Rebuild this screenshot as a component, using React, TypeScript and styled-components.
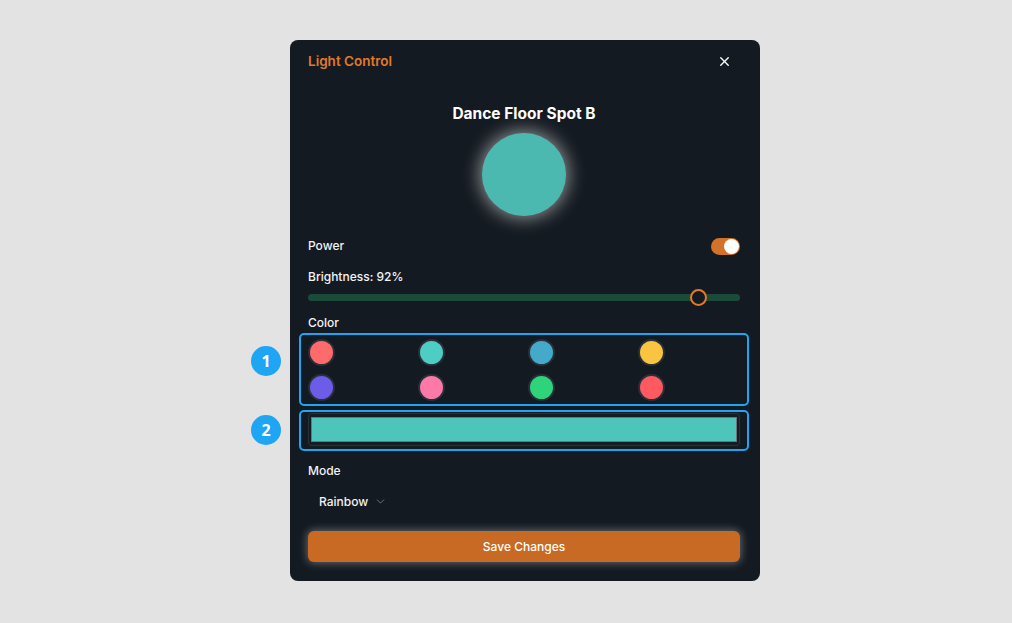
import React from "react";
import styled, { createGlobalStyle } from "styled-components";
import { X, ChevronDown } from "lucide-react";

const Global = createGlobalStyle`
  html, body { margin: 0; padding: 0; background: #e3e3e3; }
  body { font-family: Inter, "Noto Sans", "Liberation Sans", sans-serif; }
  * { box-sizing: border-box; }
`;

const Page = styled.div`
  width: 1012px;
  height: 623px;
  padding: 40px 0 0 290px;
  background: #e3e3e3;
`;

const Card = styled.div`
  width: 470px;
  height: 541px;
  background: #141a21;
  border-radius: 8px;
  padding: 11px 20px 19px 18px;
  display: flex;
  flex-direction: column;
  color: #f3f4f6;
`;

const Header = styled.div`
  display: flex;
  align-items: center;
  justify-content: space-between;
  height: 20px;
`;

const Brand = styled.div`
  color: #e07a2c;
  font-size: 13.5px;
  font-weight: 600;
  line-height: 20px;
`;

const Close = styled.button`
  width: 20px;
  height: 20px;
  margin-right: 6px;
  padding: 0;
  border: 0;
  background: transparent;
  color: #ffffff;
  display: flex;
  align-items: center;
  justify-content: center;
`;

const Title = styled.h2`
  margin: 32px 0 0;
  text-align: center;
  font-size: 15.5px;
  font-weight: 700;
  line-height: 22px;
  color: #ffffff;
`;

const Bulb = styled.div<{ $color: string }>`
  align-self: center;
  width: 84px;
  height: 84px;
  margin: 8px 0 0 -1px;
  border-radius: 50%;
  background: ${(p) => p.$color};
  box-shadow: 0 0 18px 2px rgba(255, 255, 255, 0.55);
`;

const Row = styled.div<{ $mt: number }>`
  display: flex;
  align-items: center;
  justify-content: space-between;
  margin-top: ${(p) => p.$mt}px;
`;

const Label = styled.div<{ $mt?: number }>`
  font-size: 12px;
  font-weight: 500;
  line-height: 18px;
  color: #f3f4f6;
  margin-top: ${(p) => p.$mt ?? 0}px;
`;

const Toggle = styled.div<{ $on: boolean }>`
  width: 29px;
  height: 17px;
  border-radius: 9px;
  background: ${(p) => (p.$on ? "#d2732a" : "#3a414a")};
  display: flex;
  align-items: center;
  justify-content: ${(p) => (p.$on ? "flex-end" : "flex-start")};
  padding: 0 1px;
`;

const Knob = styled.div`
  width: 15px;
  height: 15px;
  border-radius: 50%;
  background: #ffffff;
`;

const Slider = styled.div`
  position: relative;
  height: 17px;
  margin-top: 3px;
  display: flex;
  align-items: center;
`;

const Track = styled.div`
  width: 100%;
  height: 7px;
  border-radius: 4px;
  background: #1b4a3b;
`;

const Thumb = styled.div`
  position: absolute;
  top: 0;
  width: 17px;
  height: 17px;
  border-radius: 50%;
  border: 2px solid #e07a2c;
  background: #141a21;
`;

const Annotated = styled.div<{ $mt: number }>`
  position: relative;
  margin-top: ${(p) => p.$mt}px;
`;

const Outline = styled.div<{ $t: number; $b: number }>`
  position: absolute;
  top: ${(p) => -p.$t}px;
  bottom: ${(p) => -p.$b}px;
  left: -9px;
  right: -9px;
  border: 2px solid #1ea5f4;
  border-radius: 5px;
  pointer-events: none;
`;

const Badge = styled.div<{ $top: number }>`
  position: absolute;
  left: -57px;
  top: ${(p) => p.$top}px;
  width: 30px;
  height: 30px;
  border-radius: 50%;
  background: #1ea5f4;
  color: #ffffff;
  font-size: 16px;
  font-weight: 700;
  display: flex;
  align-items: center;
  justify-content: center;
  font-family: "Open Sans", Inter, sans-serif;
`;

const Grid = styled.div`
  display: grid;
  grid-template-columns: repeat(4, 1fr);
  column-gap: 8px;
  row-gap: 8px;
`;

const Swatch = styled.div<{ $color: string }>`
  width: 27px;
  height: 27px;
  border-radius: 50%;
  background: ${(p) => p.$color};
  border: 2px solid #2a3039;
`;

const ColorField = styled.div`
  height: 33px;
  border: 1px solid #2b3139;
  border-radius: 3px;
  background: #161c23;
  padding: 3px 2px;
  display: flex;
`;

const ColorFill = styled.div<{ $color: string }>`
  flex: 1;
  background: ${(p) => p.$color};
  border: 1px solid #6f7377;
`;

const Select = styled.div`
  display: flex;
  align-items: center;
  gap: 6px;
  margin-top: 12px;
  padding-left: 11px;
  height: 18px;
  font-size: 12px;
  font-weight: 500;
  color: #f3f4f6;
  svg { color: #80868e; margin-top: 1px; }
`;

const SaveButton = styled.button`
  margin-top: 21px;
  height: 31px;
  width: 100%;
  border: 0;
  border-radius: 6px;
  background: #c86a23;
  color: #ffffff;
  font-family: inherit;
  font-size: 12px;
  font-weight: 500;
  box-shadow: 0 0 9px 1px rgba(255, 255, 255, 0.35);
`;

const swatches = [
  "#ff6b6b",
  "#4ecdc4",
  "#45aaca",
  "#f9c440",
  "#6c5ce7",
  "#fd79a8",
  "#2ed47a",
  "#ff5a5f",
];

export default function App() {
  const brightness = 92;
  return (
    <Page>
      <Global />
      <Card>
        <Header>
          <Brand>Light Control</Brand>
          <Close aria-label="Close">
            <X size={15} strokeWidth={2.2} />
          </Close>
        </Header>
        <Title>Dance Floor Spot B</Title>
        <Bulb $color="#4cb9b0" />
        <Row $mt={21}>
          <Label>Power</Label>
          <Toggle $on>
            <Knob />
          </Toggle>
        </Row>
        <Label $mt={13}>Brightness: {brightness}%</Label>
        <Slider>
          <Track />
          <Thumb style={{ left: `calc((100% - 17px) * ${brightness / 100})` }} />
        </Slider>
        <Label $mt={8}>Color</Label>
        <Annotated $mt={7}>
          <Grid>
            {swatches.map((c, i) => (
              <Swatch key={i} $color={c} />
            ))}
          </Grid>
          <Outline $t={6} $b={5} />
          <Badge $top={7}>1</Badge>
        </Annotated>
        <Annotated $mt={12}>
          <ColorField>
            <ColorFill $color="#4ec5bb" />
          </ColorField>
          <Outline $t={3} $b={5} />
          <Badge $top={2}>2</Badge>
        </Annotated>
        <Label $mt={16}>Mode</Label>
        <Select>
          Rainbow
          <ChevronDown size={13} strokeWidth={1.5} />
        </Select>
        <SaveButton>Save Changes</SaveButton>
      </Card>
    </Page>
  );
}
